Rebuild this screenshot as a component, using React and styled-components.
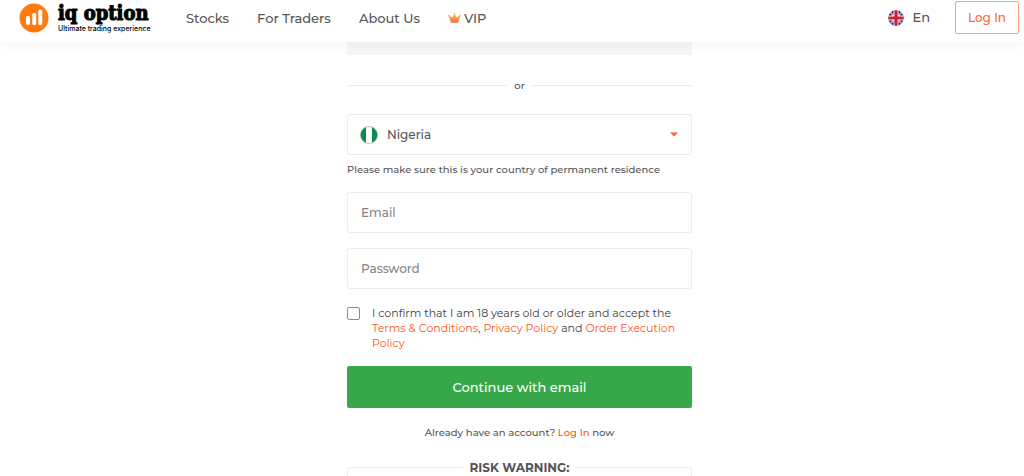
import React from "react";
import styled, { createGlobalStyle } from "styled-components";

const GlobalStyle = createGlobalStyle`
  * { box-sizing: border-box; }
  body {
    margin: 0;
    background: #fff;
    color: #555;
    font-family: Montserrat, Inter, sans-serif;
    font-size: 10px;
    font-weight: 500;
    line-height: 15px;
  }
  button, input, select { font: inherit; color: inherit; }
`;

const Page = styled.div`
  height: 100vh;
  overflow: hidden;
`;

const Header = styled.header`
  position: relative;
  display: flex;
  align-items: center;
  height: 42px;
  padding: 0 5px 7px 19px;
  background: #fff;
  box-shadow: 0 2px 14px rgba(0, 0, 0, 0.05);
`;

const Logo = styled.a`
  display: flex;
  align-items: center;
  gap: 9px;
  width: 167px;
  color: #000;
  text-decoration: none;
`;

const LogoText = styled.span`
  display: flex;
  flex-direction: column;
  white-space: nowrap;
`;

const Brand = styled.strong`
  font: bold 20px/22px "DejaVu Serif Condensed", "DejaVu Serif", serif;
  font-stretch: condensed;
  -webkit-text-stroke: 1px #000;
`;

const Tagline = styled.span`
  font: 500 7px/9px Inter, Roboto, sans-serif;
`;

const Nav = styled.nav`
  display: flex;
  gap: 28px;
  flex: 1;
`;

const NavLink = styled.a`
  display: flex;
  align-items: center;
  gap: 3px;
  font-size: 13px;
  line-height: 20px;
  color: inherit;
  text-decoration: none;
  white-space: nowrap;
`;

const Language = styled.button`
  display: flex;
  align-items: center;
  gap: 8px;
  margin-right: 25px;
  padding: 0;
  border: 0;
  background: none;
  font-size: 13px;
`;

const LoginButton = styled.button`
  width: 64px;
  height: 33px;
  padding: 0;
  border: 1px solid #ff9a7a;
  border-radius: 2px;
  background: #fff;
  color: #ff5f33;
  font-size: 12px;
`;

const Main = styled.main`
  display: flex;
  justify-content: center;
  padding-left: 15px;
`;

const Form = styled.form`
  width: 345px;
`;

const SocialPanel = styled.div`
  height: 13px;
  background: #f6f6f6;
`;

const Divider = styled.div`
  display: flex;
  align-items: center;
  gap: 7px;
  margin: 23px 0 21px;

  &::before, &::after {
    content: "";
    flex: 1;
    height: 1px;
    background: #ececec;
  }
`;

const Field = styled.div`
  display: flex;
  align-items: center;
  height: 41px;
  margin-bottom: ${(p) => p.$gap}px;
  padding: 0 12px;
  border: 1px solid #ececec;
  border-radius: 3px;
`;

const CountrySelect = styled.select`
  flex: 1;
  height: 100%;
  padding: 0 0 0 9px;
  border: 0;
  background: none;
  appearance: none;
  font-size: 12px;
`;

const TextInput = styled.input`
  width: 100%;
  height: 100%;
  padding: 0 1px;
  border: 0;
  outline: 0;
  background: none;
  font-size: 12px;

  &::placeholder { color: #858585; opacity: 1; }
`;

const Hint = styled.p`
  margin: 0 0 15px;
  white-space: nowrap;
`;

const Consent = styled.div`
  display: flex;
  align-items: flex-start;
  gap: 12px;
  margin-bottom: 15px;
  font-size: 11px;
  font-weight: 400;
  color: #404040;
`;

const Checkbox = styled.input`
  flex: none;
  width: 13px;
  height: 13px;
  margin: 1px 0 0;
  border: 1px solid #8c8c8c;
  border-radius: 2px;
  background: #fff;
  appearance: none;

  &:checked { background: #37a849; }
`;

const TextLink = styled.a`
  color: #ff5522;
  text-decoration: none;
`;

const Submit = styled.button`
  display: block;
  width: 100%;
  height: 42px;
  border: 0;
  border-radius: 2px;
  background: #37a849;
  color: #fff;
  font-size: 13px;
`;

const Already = styled.p`
  margin: 17px 0 20px;
  text-align: center;
`;

const Risk = styled.fieldset`
  height: 60px;
  margin: 0;
  border: 1px solid #ececec;
  border-radius: 3px;

  legend {
    margin: 0 auto;
    padding: 0 7px;
    font-weight: 700;
    font-size: 12px;
  }
`;

const LogoMark = () => (
  <svg width="30" height="30" viewBox="0 0 30 30" aria-hidden="true">
    <circle cx="15" cy="15" r="14.5" fill="#ff7a0f" />
    <g stroke="#fff" strokeWidth="4" strokeLinecap="round">
      <path d="M9 14.8v5.4M15.2 11.8v8.4M21.3 8.6v11.6" />
    </g>
  </svg>
);

const Crown = () => (
  <svg width="13" height="12" viewBox="0 0 13 12" aria-hidden="true">
    <defs>
      <linearGradient id="crown" x1="0" y1="0" x2="0" y2="1">
        <stop offset="0" stopColor="#ffc44d" />
        <stop offset="1" stopColor="#ff6b4a" />
      </linearGradient>
    </defs>
    <path
      fill="url(#crown)"
      d="M6.5 .8a.8.8 0 0 1 .4 1.5l1.7 3.2 2.7-1.6a.8.8 0 1 1 .8.5L10.6 9.2H2.4L.9 4.4a.8.8 0 1 1 .8-.5l2.7 1.6 1.7-3.2A.8.8 0 0 1 6.5.8zM2.6 9.2h7.8v1.6H2.6z"
    />
  </svg>
);

const UkFlag = () => (
  <svg width="16" height="16" viewBox="0 0 16 16" aria-hidden="true">
    <clipPath id="uk"><circle cx="8" cy="8" r="7.7" /></clipPath>
    <g clipPath="url(#uk)">
      <path fill="#20307d" d="M0 0h16v16H0z" />
      <path stroke="#fff" strokeWidth="1.2" d="M1 1l14 14M15 1L1 15" />
      <path stroke="#d31c36" strokeWidth=".4" d="M1 1l14 14M15 1L1 15" />
      <path stroke="#fff" strokeWidth="5" d="M8 0v16M0 8h16" />
      <path stroke="#d31c36" strokeWidth="3.2" d="M8 0v16M0 8h16" />
    </g>
  </svg>
);

const NigeriaFlag = () => (
  <svg width="18" height="18" viewBox="0 0 18 18" aria-hidden="true">
    <clipPath id="ng"><circle cx="9" cy="9" r="8.5" /></clipPath>
    <g clipPath="url(#ng)">
      <path fill="#fff" d="M0 0h18v18H0z" />
      <path fill="#078a53" d="M0 0h6v18H0zM12 0h6v18h-6z" />
    </g>
    <circle cx="9" cy="9" r="8.5" fill="none" stroke="#9aaea4" strokeWidth=".7" />
  </svg>
);

export default function App() {
  return (
    <Page>
      <GlobalStyle />
      <Header>
        <Logo href="#">
          <LogoMark />
          <LogoText>
            <Brand>iq option</Brand>
            <Tagline>Ultimate trading experience</Tagline>
          </LogoText>
        </Logo>
        <Nav>
          <NavLink href="#">Stocks</NavLink>
          <NavLink href="#">For Traders</NavLink>
          <NavLink href="#">About Us</NavLink>
          <NavLink href="#"><Crown />VIP</NavLink>
        </Nav>
        <Language type="button"><UkFlag />En</Language>
        <LoginButton type="button">Log In</LoginButton>
      </Header>
      <Main>
        <Form onSubmit={(e) => e.preventDefault()}>
          <SocialPanel />
          <Divider>or</Divider>
          <Field $gap={7}>
            <NigeriaFlag />
            <CountrySelect aria-label="Country" defaultValue="ng">
              <option value="ng">Nigeria</option>
            </CountrySelect>
            <svg width="10" height="5" viewBox="0 0 10 5" aria-hidden="true">
              <path fill="#ff5f33" d="M1 .5h8L5 4.5z" />
            </svg>
          </Field>
          <Hint>Please make sure this is your country of permanent residence</Hint>
          <Field $gap={15}>
            <TextInput type="email" placeholder="Email" aria-label="Email" />
          </Field>
          <Field $gap={17}>
            <TextInput type="password" placeholder="Password" aria-label="Password" />
          </Field>
          <Consent>
            <Checkbox type="checkbox" id="confirm" />
            <label htmlFor="confirm">
              I confirm that I am 18 years old or older and accept the{" "}
              <TextLink href="#">Terms &amp; Conditions</TextLink>,{" "}
              <TextLink href="#">Privacy Policy</TextLink> and{" "}
              <TextLink href="#">Order Execution Policy</TextLink>
            </label>
          </Consent>
          <Submit type="submit">Continue with email</Submit>
          <Already>
            Already have an account? <TextLink href="#">Log In</TextLink> now
          </Already>
          <Risk>
            <legend>RISK WARNING:</legend>
          </Risk>
        </Form>
      </Main>
    </Page>
  );
}
